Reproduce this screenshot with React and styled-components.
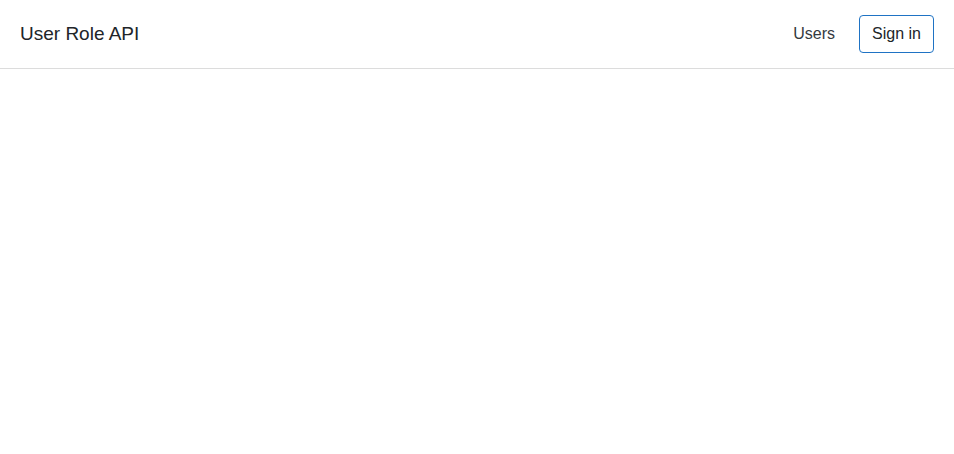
import React from 'react';
import styled, { createGlobalStyle } from 'styled-components';

const GlobalStyle = createGlobalStyle`
  body {
    margin: 0;
    background: #fff;
    font-family: "Liberation Sans", Arial, sans-serif;
    color: #212529;
  }
`;

const Navbar = styled.nav`
  display: flex;
  align-items: center;
  justify-content: space-between;
  height: 69px;
  padding: 0 20px;
  box-sizing: border-box;
  background: #fff;
  border-bottom: 1px solid #dcdcdc;
  box-shadow: 0 2px 5px rgba(0, 0, 0, 0.08);
`;

const Brand = styled.a`
  font-size: 19px;
  color: #212529;
  text-decoration: none;
`;

const NavLinks = styled.div`
  display: flex;
  align-items: center;
  gap: 24px;
`;

const NavLink = styled.a`
  font-size: 16px;
  color: #343a40;
  text-decoration: none;
`;

const OutlineButton = styled.button`
  height: 38px;
  margin-top: -1px;
  padding: 0 12px;
  font-family: inherit;
  font-size: 16px;
  color: #212529;
  background: #fff;
  border: 1px solid #1f73c4;
  border-radius: 4px;
  cursor: pointer;
`;

const App = () => (
  <>
    <GlobalStyle />
    <Navbar>
      <Brand href="/">User Role API</Brand>
      <NavLinks>
        <NavLink href="/users">Users</NavLink>
        <OutlineButton>Sign in</OutlineButton>
      </NavLinks>
    </Navbar>
  </>
);

export default App;
